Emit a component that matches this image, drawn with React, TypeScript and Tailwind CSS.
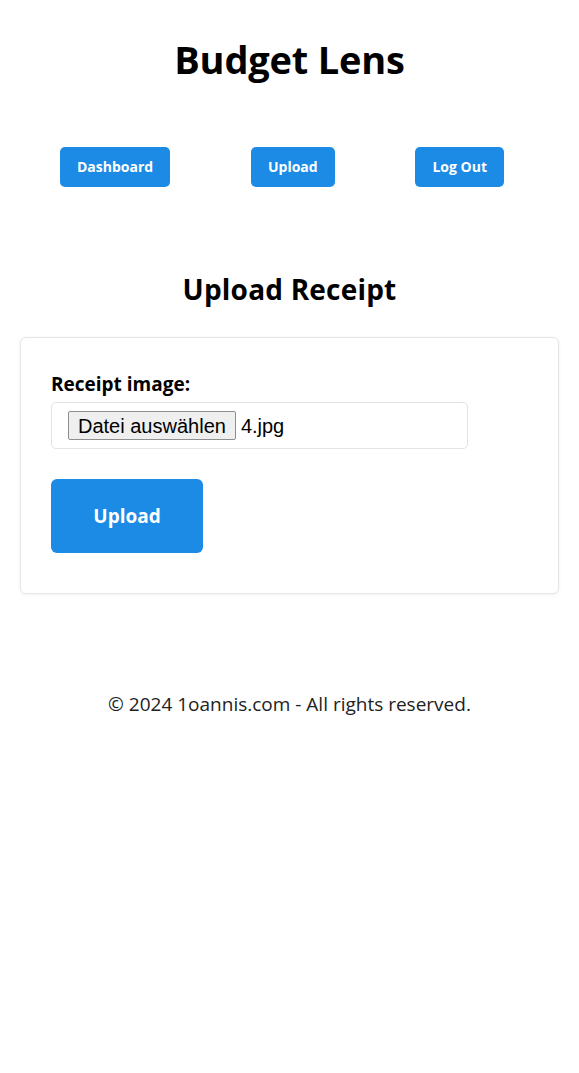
import React from 'react';

const font = { fontFamily: '"Open Sans", "Noto Sans", sans-serif' };
const nativeFont = { fontFamily: '"Liberation Sans", Arial, sans-serif' };

export default function App() {
  return (
    <div className="min-h-screen bg-white text-black font-['Open_Sans',sans-serif]">
      <header className="pt-[37px] text-center">
        <h1 className="text-[38px] font-bold leading-[44px] tracking-[-0.2px]">Budget Lens</h1>
      </header>

      <nav className="mt-[66px] flex justify-between pl-[60px] pr-[75px]">
        <a className="rounded-[5px] bg-[#1b8be6] px-[17px] py-[10px] text-[14px] font-bold leading-[20px] text-white">Dashboard</a>
        <a className="rounded-[5px] bg-[#1b8be6] px-[17px] py-[10px] text-[14px] font-bold leading-[20px] text-white">Upload</a>
        <a className="rounded-[5px] bg-[#1b8be6] px-[17px] py-[10px] text-[14px] font-bold leading-[20px] text-white">Log Out</a>
      </nav>

      <main className="px-[20px]">
        <h2 className="mt-[84px] text-center text-[28px] font-bold leading-[36px] tracking-[0.2px]">Upload Receipt</h2>

        <form className="mt-[30px] rounded-[6px] border border-[#e6e6e6] px-[30px] pt-[34px] pb-[40px] shadow-[0_1px_4px_rgba(0,0,0,0.06)]">
          <label className="block text-[19px] font-bold leading-[24px]">Receipt image:</label>
          <div className="mt-[6px] flex h-[47px] w-[417px] items-center rounded-[5px] border border-[#e3e3e3] pl-[16px]">
            <span
              style={nativeFont}
              className="flex h-[29px] items-center rounded-[2px] border border-[#8f8f8f] bg-[#efefef] px-[9px] text-[20px] text-black"
            >
              Datei auswählen
            </span>
            <span style={nativeFont} className="ml-[5px] text-[20px] text-black">
              4.jpg
            </span>
          </div>
          <button
            type="button"
            className="mt-[30px] h-[74px] w-[152px] rounded-[6px] bg-[#1b8be6] text-[19px] font-bold text-white"
          >
            Upload
          </button>
        </form>
      </main>

      <footer className="mt-[98px] text-center text-[19px] leading-[24px] text-[#222]" style={font}>
        © 2024 1oannis.com - All rights reserved.
      </footer>
    </div>
  );
}
